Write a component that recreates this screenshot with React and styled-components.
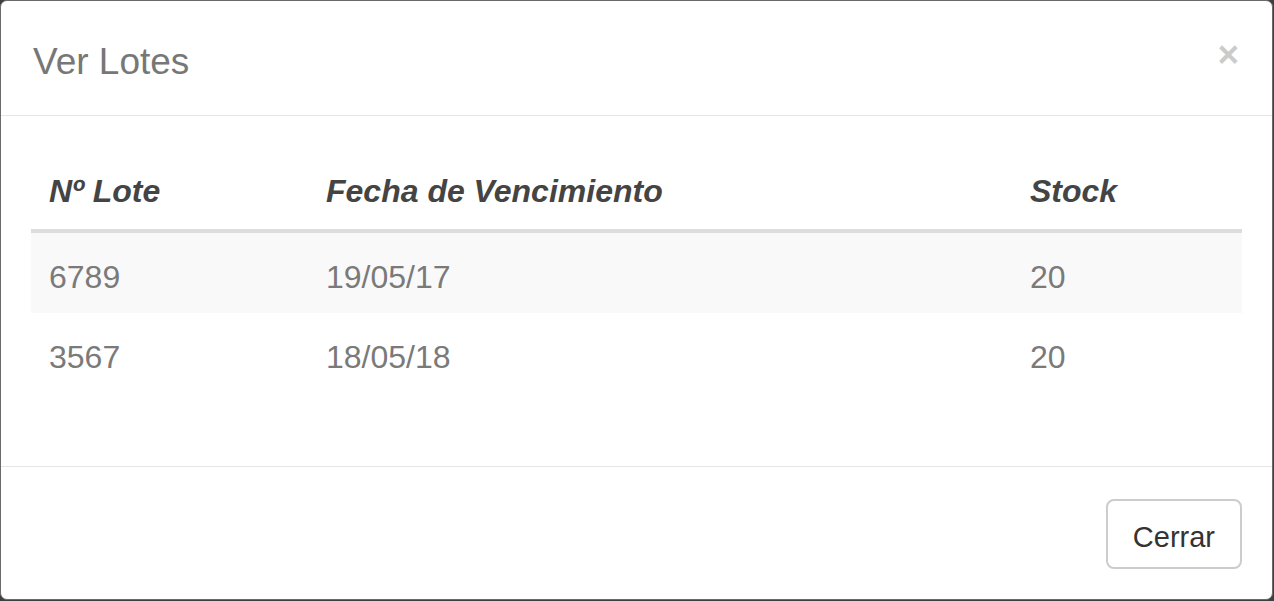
import React from "react";
import styled, { createGlobalStyle } from "styled-components";

const GlobalStyle = createGlobalStyle`
	html, body {
		margin: 0;
		padding: 0;
		background: #3f3f3f;
		font-family: "Liberation Sans", Arial, Helvetica, sans-serif;
	}
`;

const lotes = [
	{ lote: "6789", vencimiento: "19/05/17", stock: "20" },
	{ lote: "3567", vencimiento: "18/05/18", stock: "20" },
];

const App = () => {
	return (
		<>
			<GlobalStyle />
			<Backdrop>
				<Modal>
					<Header>
						<Title>Ver Lotes</Title>
						<Close type="button" aria-label="Close">
							&times;
						</Close>
					</Header>
					<Body>
						<Table>
							<colgroup>
								<Col $width="277px" />
								<Col $width="704px" />
								<Col />
							</colgroup>
							<thead>
								<tr>
									<Th>Nº Lote</Th>
									<Th>Fecha de Vencimiento</Th>
									<Th>Stock</Th>
								</tr>
							</thead>
							<tbody>
								{lotes.map((item, i) => (
									<Row key={item.lote} $striped={i % 2 === 0}>
										<Td>{item.lote}</Td>
										<Td>{item.vencimiento}</Td>
										<Td>{item.stock}</Td>
									</Row>
								))}
							</tbody>
						</Table>
					</Body>
					<Footer>
						<Button type="button">Cerrar</Button>
					</Footer>
				</Modal>
			</Backdrop>
		</>
	);
};

const Backdrop = styled.div`
	width: 1274px;
	height: 601px;
	overflow: hidden;
	background: #3f3f3f;
`;

const Modal = styled.div`
	box-sizing: border-box;
	width: 1273px;
	height: 600px;
	background: #fff;
	border: 1px solid #6a6a6a;
	border-radius: 7px;
	display: flex;
	flex-direction: column;
	overflow: hidden;
`;

const Header = styled.div`
	display: flex;
	justify-content: space-between;
	align-items: flex-start;
	padding: 35px 33px 28px 32px;
	border-bottom: 1px solid #e5e5e5;
`;

const Title = styled.h4`
	margin: 0;
	font-size: 37px;
	line-height: 51px;
	font-weight: 400;
	color: #777;
`;

const Close = styled.button`
	margin-top: 0;
	padding: 0;
	border: 0;
	background: transparent;
	font-family: "Liberation Sans", Arial, sans-serif;
	font-size: 37px;
	font-weight: 700;
	line-height: 1;
	color: #000;
	opacity: 0.2;
	cursor: pointer;
`;

const Body = styled.div`
	padding: 36px 30px 73px 30px;
`;

const Table = styled.table`
	width: 100%;
	table-layout: fixed;
	border-collapse: collapse;
	border-spacing: 0;
	font-size: 32px;
	line-height: 46px;
`;

const Col = styled.col`
	width: ${(p) => p.$width || "auto"};
`;

const Th = styled.th`
	text-align: left;
	padding: 16px 16px 15px 18px;
	font-weight: 700;
	font-style: italic;
	color: #444;
	border-bottom: 4px solid #ddd;
	white-space: nowrap;
`;

const Row = styled.tr`
	background: ${(p) => (p.$striped ? "#f9f9f9" : "transparent")};
`;

const Td = styled.td`
	padding: 21px 16px 13px 18px;
	color: #7a7a7a;
`;

const Footer = styled.div`
	display: flex;
	justify-content: flex-end;
	padding: 32px 30px 30px 30px;
	border-top: 1px solid #e5e5e5;
`;

const Button = styled.button`
	box-sizing: border-box;
	height: 70px;
	padding: 15px 25px 9px 25px;
	border: 2px solid #ccc;
	border-radius: 8px;
	background: #fff;
	font-family: "Liberation Sans", Arial, sans-serif;
	font-size: 29px;
	line-height: 42px;
	color: #333;
	cursor: pointer;
`;

export default App;
